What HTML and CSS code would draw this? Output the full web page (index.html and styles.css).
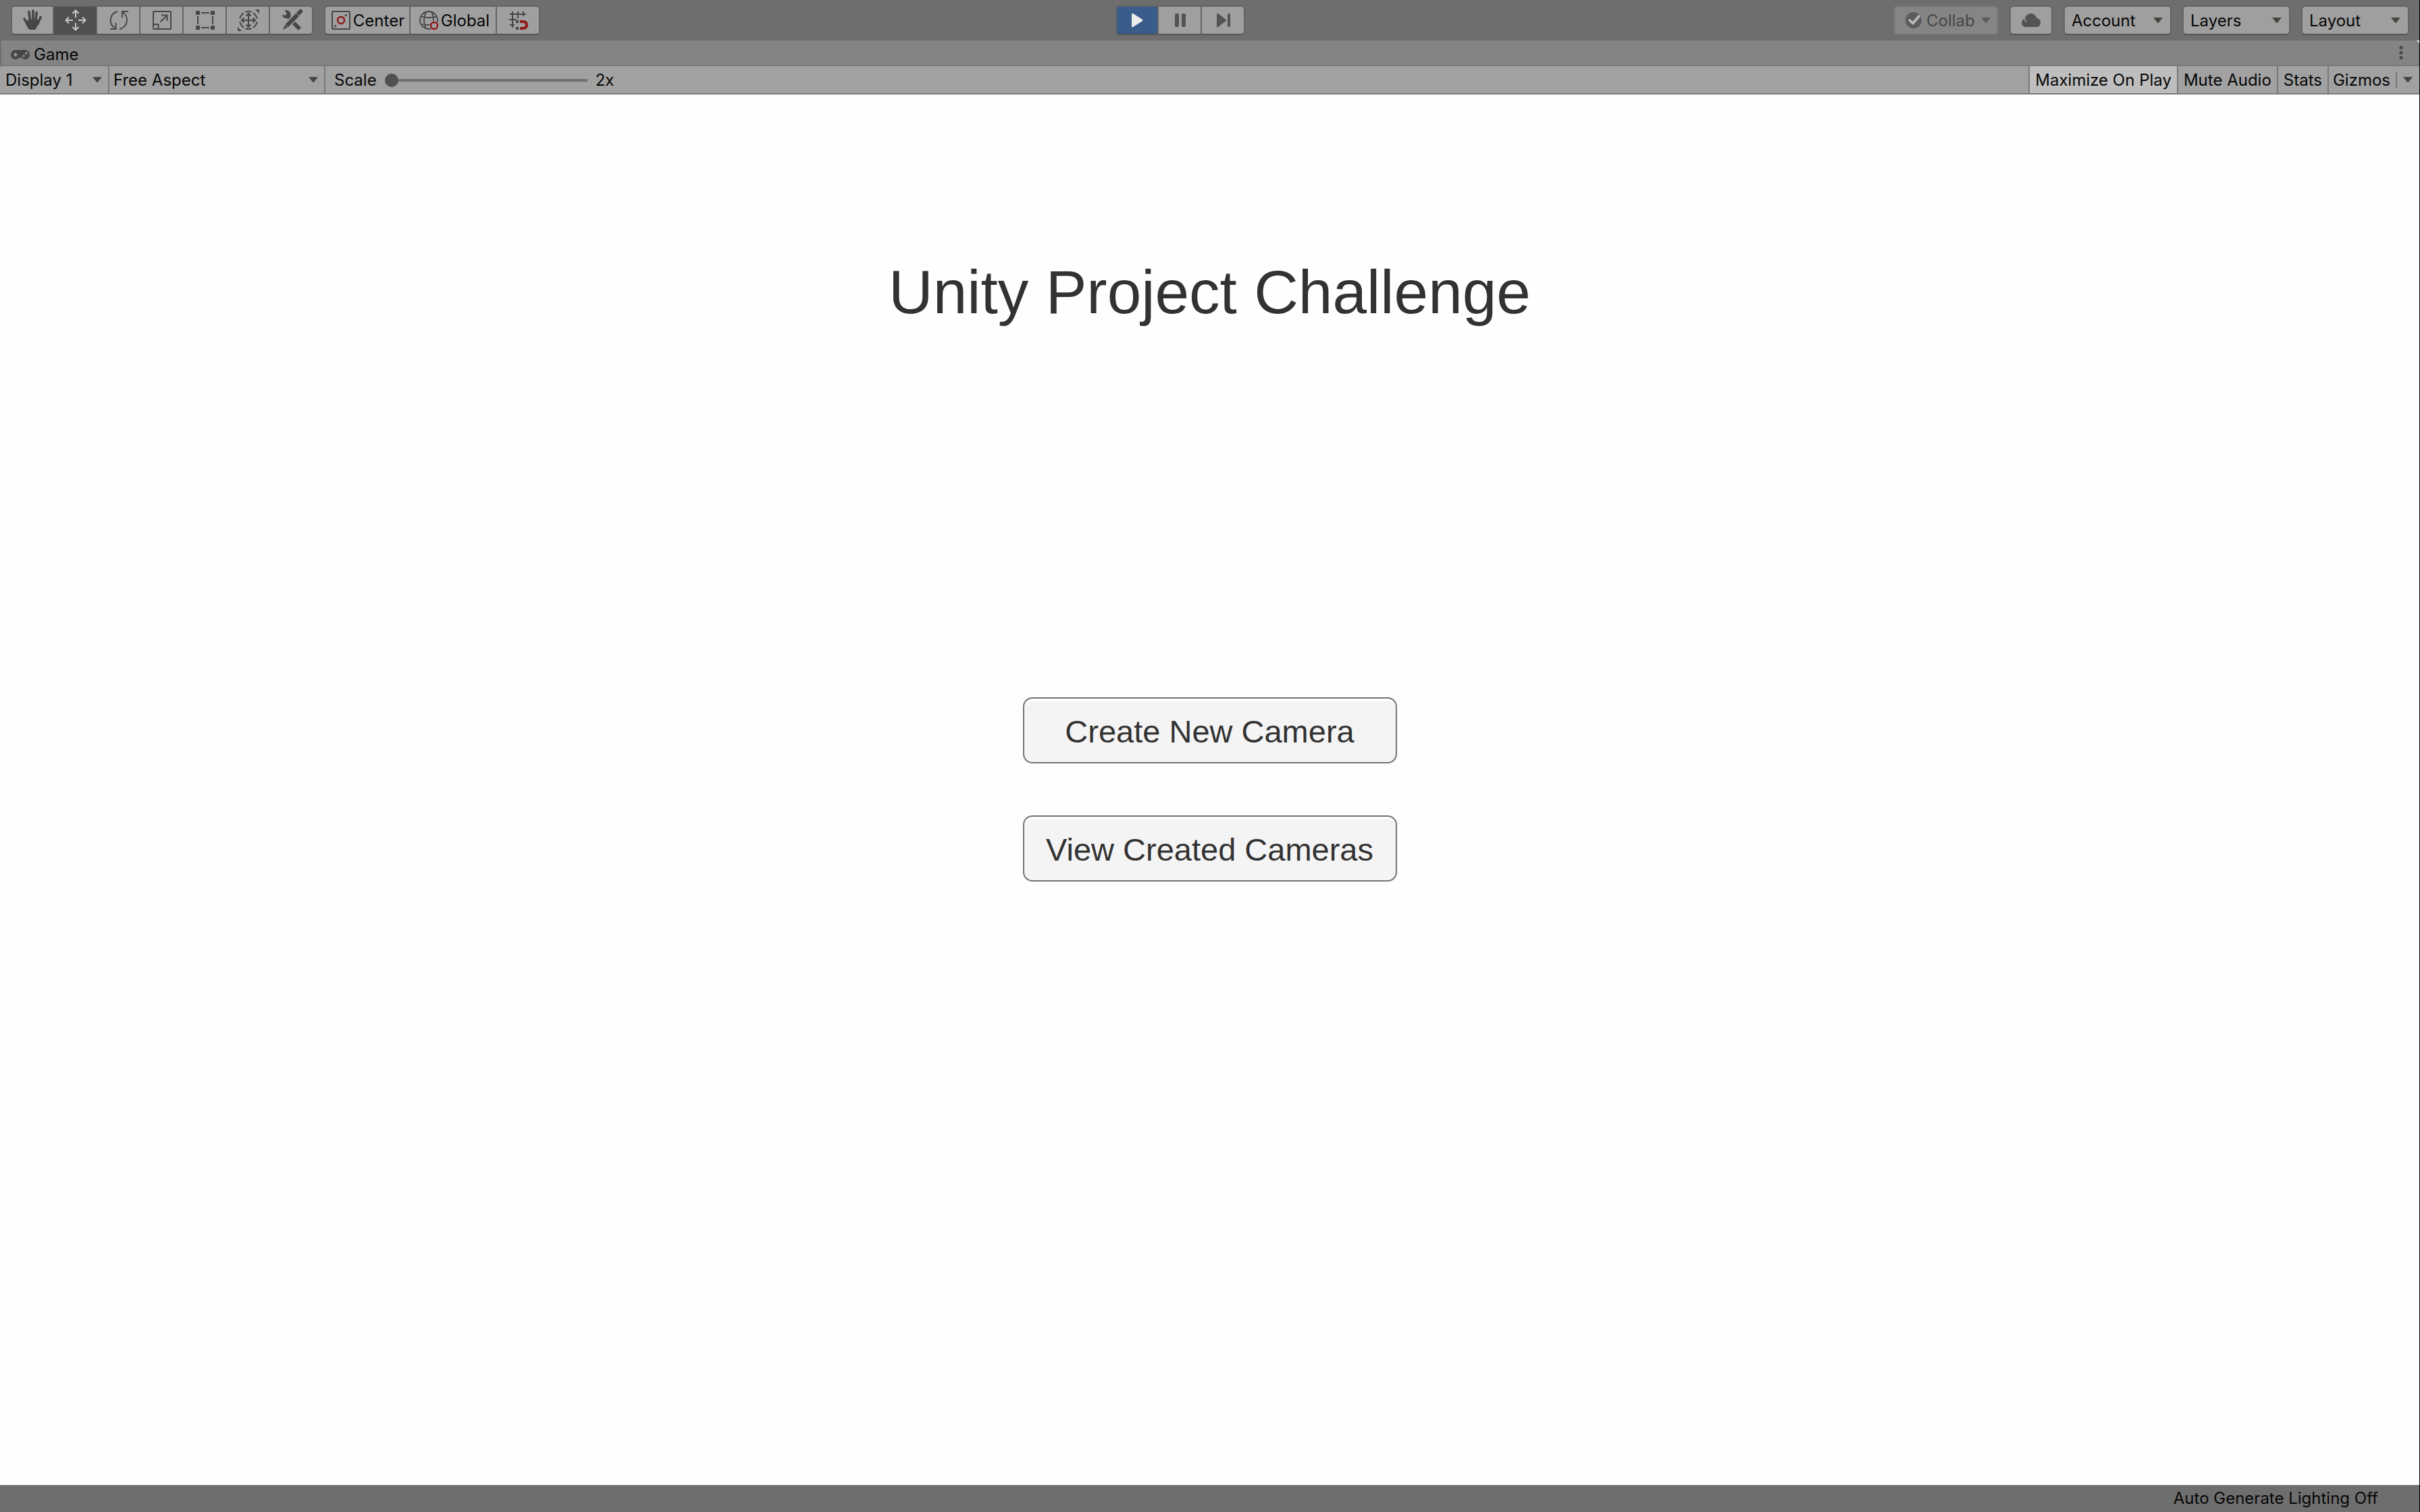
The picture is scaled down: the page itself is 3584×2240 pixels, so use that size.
FILE: index.html
```html
<!DOCTYPE html>
<html lang="en">
<head>
<meta charset="utf-8">
<title>Game</title>
<link rel="stylesheet" href="styles.css">
</head>
<body>
<svg class="defs" aria-hidden="true">
  <symbol id="caret" viewBox="0 0 14 8"><path d="M0 0h14L8 7.5q-1 1-2 0z" fill="currentColor"/></symbol>
</svg>
<div class="editor">
  <header class="toolbar">
    <div class="toolbar-left">
      <div class="group" role="group" aria-label="Transform tools">
        <button class="tool" aria-label="Hand">
          <svg class="icon" viewBox="0 0 32 32"><g fill="none" stroke="currentColor" stroke-linecap="round" stroke-width="3.6"><path d="M4 14l5 9M10.800 3.500l2 14M17 2v16M22.300 4.500l-1.800 14M28.200 11.500l-5 11"/></g><path d="M6 19l4-4h14l1.500 3-3 8q-1.500 4-3 4h-6q-3 0-5-4z" fill="currentColor"/></svg>
        </button>
        <button class="tool tool-active" aria-label="Move" aria-pressed="true">
          <svg class="icon" viewBox="0 0 32 32"><path d="M16 12V2M11.500 6L16 1.500 20.500 6M16 20v10M11.500 26l4.500 4.500 4.500-4.500M12 16H2M6 11.500L1.500 16 6 20.500M20 16h10M26 11.500l4.500 4.500-4.500 4.500" fill="none" stroke="currentColor" stroke-width="2"/></svg>
        </button>
        <button class="tool" aria-label="Rotate">
          <svg class="icon" viewBox="0 0 32 32"><path d="M14 3A13.500 13.500 0 0 0 10 27.500M3 29h8.500v-9M17 29A13.500 13.500 0 0 0 22 4.500M21 12V3h9" fill="none" stroke="currentColor" stroke-width="2"/></svg>
        </button>
        <button class="tool" aria-label="Scale">
          <svg class="icon" viewBox="0 0 32 32"><rect x="3" y="3" width="26" height="26" rx="1" fill="none" stroke="currentColor" stroke-width="2"/><path d="M3 22h7.500v7M13.500 18.500L23.500 8.500M15 8.500h8.500V17" fill="none" stroke="currentColor" stroke-width="2"/></svg>
        </button>
        <button class="tool" aria-label="Rect">
          <svg class="icon" viewBox="0 0 32 32"><g fill="currentColor"><rect x="2" y="2" width="6" height="6" rx="1"/><rect x="24" y="2" width="6" height="6" rx="1"/><rect x="2" y="24" width="6" height="6" rx="1"/><rect x="24" y="24" width="6" height="6" rx="1"/></g><path d="M10 5h12M10 27h12M5 10v12M27 10v12" stroke="currentColor" stroke-width="2"/></svg>
        </button>
        <button class="tool" aria-label="Transform">
          <svg class="icon" viewBox="0 0 32 32"><g fill="none" stroke="currentColor" stroke-width="2"><path d="M11.500 3.800Q16 2 20.500 3.800M11.500 28.200Q16 30 20.500 28.200M3.200 13.500Q4.800 8 9 5M3.200 18.500Q4.800 24 9 27M28.800 13.500Q27.200 8 23 5M28.800 18.500Q27.200 24 23 27"/><path d="M16 7v18M7 16h18M12.500 9.500L16 6l3.500 3.500M12.500 22.500L16 26l3.500-3.500M9.500 12.500L6 16l3.500 3.500M22.500 12.500L26 16l-3.500 3.500"/></g><path d="M26 0h6v6zM0 26v6h6z" fill="currentColor"/></svg>
        </button>
        <button class="tool" aria-label="Custom tools">
          <svg class="icon" viewBox="0 0 32 32"><path d="M19 20l9 9" stroke="currentColor" stroke-width="6"/><path d="M2 7.500l5 1.500 1.500-3.500-3-4Q11-.5 14 5q1 3 0 5l3.500 3.500-4 4L9 13q-6 .5-7-5.500z" fill="currentColor"/><path d="M24 8L8 24" stroke="#9f9f9f" stroke-width="9"/><path d="M25.500 6.500l4-4" stroke="currentColor" stroke-width="6" stroke-linecap="round"/><path d="M22.500 5.500l4.500 4.500L11 26l-8 4 3.500-8z" fill="currentColor"/><path d="M6 22l4.500 4.500M22.500 5l5 5" stroke="#9f9f9f" stroke-width="1"/></svg>
        </button>
      </div>
      <div class="group" role="group" aria-label="Handle options">
        <button class="handle">
          <svg class="icon" viewBox="0 0 32 32"><rect x="3" y="3" width="26" height="26" rx="1" fill="none" stroke="currentColor" stroke-width="2"/><path d="M6 26l4-4M22 10l4-4" stroke="currentColor" stroke-width="2" stroke-dasharray="4 2"/><circle cx="16" cy="16" r="5" fill="none" stroke="#8f1a18" stroke-width="2.400"/></svg><span>Center</span>
        </button>
        <button class="handle">
          <svg class="icon" viewBox="0 0 32 32"><g fill="none" stroke="currentColor" stroke-width="1.800"><circle cx="16" cy="16" r="13"/><path d="M12 3.500Q6 16 12 28.500M20 3.500Q24 11 22.500 19M4 10.500q12 3 24 0M4 21.500q7 2 14 1"/></g><circle cx="24" cy="24" r="7" fill="#9f9f9f"/><circle cx="24" cy="24" r="5" fill="none" stroke="#8f1a18" stroke-width="2.400"/></svg><span>Global</span>
        </button>
        <button class="tool" aria-label="Grid snapping">
          <svg class="icon" viewBox="0 0 32 32"><path d="M3 7h24M2 15h11M7 3v24M15 3v10M23 3v7" stroke="currentColor" stroke-width="2"/><path d="M3 23h7" stroke="currentColor" stroke-width="2"/><path d="M12 16h4v4h-4zM12 26h4v4h-4z" fill="currentColor"/><path d="M18 18h4.500q5.500 0 5.500 5t-5.500 5H18" fill="none" stroke="#8f1a18" stroke-width="4"/></svg>
        </button>
      </div>
    </div>
    <div class="group" role="group" aria-label="Playback">
      <button class="tool tool-playing" aria-label="Play" aria-pressed="true">
        <svg class="icon" viewBox="0 0 32 32"><path d="M8 7q0-2 2-1l13.500 8.500q1.500 1.500 0 3L10 26q-2 1-2-1z" fill="currentColor"/></svg>
      </button>
      <button class="tool" aria-label="Pause">
        <svg class="icon" viewBox="0 0 32 32"><g fill="#535353"><rect x="8" y="6" width="6" height="20" rx="2"/><rect x="18" y="6" width="6" height="20" rx="2"/></g></svg>
      </button>
      <button class="tool" aria-label="Step">
        <svg class="icon" viewBox="0 0 32 32"><g fill="#535353"><path d="M6 7q0-2 2-1l11 8.500q1.500 1.500 0 3L8 26q-2 1-2-1z"/><rect x="22" y="6" width="4" height="20" rx="2"/></g></svg>
      </button>
    </div>
    <div class="toolbar-right">
      <button class="collab" disabled>
        <svg class="collab-icon" viewBox="0 0 24 24"><circle cx="12" cy="12" r="12" fill="#5c5c5c"/><path d="M5 11l6 5.500L21 5" fill="none" stroke="#bdbdbd" stroke-width="3.500"/></svg><span>Collab</span>
        <svg class="caret"><use href="#caret"/></svg>
      </button>
      <button class="tool tool-single" aria-label="Services">
        <svg class="icon" viewBox="0 0 32 32"><path d="M8.500 26q-6.500-.5-6.500-6 0-4.500 4.500-6.500Q9 6 16 6q6 0 8 6.500 6 1.500 6 7 0 6-6 6.500z" fill="#535353"/><path d="M6.500 12.500q0 4 3 6" fill="none" stroke="#9f9f9f" stroke-width="1.500"/></svg>
      </button>
      <div class="select menu"><select aria-label="Account"><option>Account</option></select><svg class="caret"><use href="#caret"/></svg></div>
      <div class="select menu"><select aria-label="Layers"><option>Layers</option></select><svg class="caret"><use href="#caret"/></svg></div>
      <div class="select menu"><select aria-label="Layout"><option>Layout</option></select><svg class="caret"><use href="#caret"/></svg></div>
    </div>
  </header>

  <div class="tabs">
    <a class="tab" href="#game">
      <svg class="pad" viewBox="0 0 28 14"><path d="M7 0h14a7 7 0 0 1 0 14q-3 0-5-2.500h-4Q10 14 7 14A7 7 0 0 1 7 0z" fill="#464646"/><path d="M4 7h6M7 4v6" stroke="#9a9a9a" stroke-width="1.800"/><circle cx="19" cy="9" r="2" fill="#858585"/><circle cx="23" cy="5" r="2" fill="#858585"/></svg>Game
    </a>
    <button class="kebab" aria-label="Tab options">
      <svg viewBox="0 0 6 20"><circle cx="3" cy="2.500" r="2.500"/><circle cx="3" cy="10" r="2.500"/><circle cx="3" cy="17.500" r="2.500"/></svg>
    </button>
  </div>

  <div class="game-bar">
    <div class="select display"><select aria-label="Display"><option>Display 1</option></select><svg class="caret"><use href="#caret"/></svg></div>
    <div class="select aspect"><select aria-label="Aspect"><option>Free Aspect</option></select><svg class="caret"><use href="#caret"/></svg></div>
    <div class="scale">
      <label for="scale">Scale</label>
      <input id="scale" type="range" min="2" max="10" value="2">
      <output for="scale">2x</output>
    </div>
    <div class="toggles">
      <button class="toggle toggle-on" aria-pressed="true">Maximize On Play</button>
      <button class="toggle">Mute Audio</button>
      <button class="toggle">Stats</button>
      <button class="toggle gizmos">Gizmos</button>
      <button class="gizmos-menu" aria-label="Gizmos menu"><svg class="caret"><use href="#caret"/></svg></button>
    </div>
  </div>

  <main class="canvas" id="game">
    <h1 class="title">Unity Project Challenge</h1>
    <div class="actions">
      <button class="action">Create New Camera</button>
      <button class="action">View Created Cameras</button>
    </div>
  </main>

  <footer class="status">Auto Generate Lighting Off</footer>
</div>
</body>
</html>
```
FILE: styles.css
```css
* { box-sizing: border-box; }

body {
  margin: 0;
  font: 24px/32px Inter, sans-serif;
  color: #060606;
}

button, select, input {
  margin: 0;
  padding: 0;
  border: 0;
  border-radius: 0;
  background: none;
  font: inherit;
  color: inherit;
  white-space: nowrap;
}

svg { display: block; flex: none; }
.defs { display: none; }

.editor {
  display: flex;
  flex-direction: column;
  min-height: 100vh;
  border-right: 1px solid #000;
}

/* Main toolbar */
.toolbar {
  display: flex;
  height: 60px;
  padding: 8px 15px 8px 16px;
  background: #6e6e6e;
}

.toolbar-left {
  display: flex;
  gap: 16px;
  width: calc(50vw - 156px);
}

.toolbar-right {
  display: flex;
  gap: 16px;
  margin-left: auto;
}

.group { display: flex; }

.tool, .handle {
  display: flex;
  align-items: center;
  justify-content: center;
  width: 64px;
  height: 44px;
  padding-left: 2px;
  border: 2px solid #646464;
  border-left-width: 0;
  border-bottom-color: #555;
  background: #9f9f9f;
  color: #464646;
}

.group > :first-child {
  padding-left: 0;
  border-left-width: 2px;
  border-radius: 6px 0 0 6px;
}

.group > :last-child { border-radius: 0 6px 6px 0; }

.tool.tool-active { background: #505050; color: #c8c8c8; }
.tool.tool-playing { background: #3a5c8a; color: #ececec; }

.tool.tool-single {
  padding-left: 0;
  border-left-width: 2px;
  border-radius: 6px;
}

.handle {
  width: 128px;
  color: #060606;
}

.handle .icon { color: #464646; }
.handle span, .collab span { padding: 2px 0 0 2px; }

.icon { width: 32px; height: 32px; }
.caret { width: 14px; height: 8px; color: #464641; }

.collab {
  display: flex;
  align-items: center;
  width: 156px;
  height: 44px;
  padding-left: 16px;
  border: 2px solid #747474;
  border-radius: 6px;
  background: #858585;
  color: #464646;
  gap: 5px;
}

.collab .caret { margin-left: 4px; color: #5c5c5c; }
.collab-icon { width: 24px; height: 24px; }

.select { display: grid; align-items: center; }
.select > * { grid-area: 1 / 1; }

.select select {
  width: 100%;
  height: 100%;
  padding-top: 2px;
  appearance: none;
}

.select .caret {
  justify-self: end;
  margin-right: 9px;
  pointer-events: none;
}

.menu {
  width: 160px;
  height: 44px;
  border: 2px solid #646464;
  border-bottom-color: #555;
  border-radius: 6px;
  background: #9f9f9f;
}

.menu select { padding-left: 10px; }
.menu .caret { margin-right: 11px; }

/* Tab strip */
.tabs {
  display: flex;
  justify-content: space-between;
  height: 38px;
  border: 2px solid #6e6e6e;
  border-width: 0 1px 2px 2px;
  border-bottom-color: #797979;
  border-radius: 0 6px 0 0;
  background: #848484;
}

.tab {
  display: flex;
  align-items: center;
  gap: 6px;
  padding: 5px 14px 0;
  color: inherit;
  text-decoration: none;
}

.pad { width: 28px; height: 14px; }
.kebab { padding: 0 23px; }
.kebab svg { width: 6px; height: 20px; fill: #464641; }

/* Game view options */
.game-bar {
  display: flex;
  height: 42px;
  border-bottom: 2px solid #797979;
  background: #a1a1a1;
}

.display, .aspect { border-right: 2px solid #797979; }
.display { width: 162px; }
.aspect { width: 320px; }
.display select { padding-left: 8px; }
.aspect select { padding-left: 6px; }

.scale {
  display: flex;
  align-items: center;
  gap: 12px;
  padding: 2px 0 0 13px;
}

.scale input {
  width: 300px;
  height: 20px;
  appearance: none;
}

.scale input::-webkit-slider-runnable-track {
  height: 20px;
  background: linear-gradient(#707070, #707070) center / 100% 4px no-repeat;
}

.scale input::-webkit-slider-thumb {
  width: 20px;
  height: 20px;
  border-radius: 50%;
  background: #505050;
  appearance: none;
}

.toggles {
  display: flex;
  align-items: center;
  margin-left: auto;
}

.toggle {
  height: 40px;
  padding: 2px 8px 0;
  border-left: 2px solid #797979;
}

.toggle-on { background: #bebebe; }
.gizmos { padding: 2px 8px 0 6px; }

.gizmos-menu {
  height: 24px;
  padding: 0 10px 0 9px;
  border-left: 2px solid #797979;
}

/* Game canvas */
.canvas {
  display: flex;
  flex: 1;
  flex-direction: column;
  align-items: center;
  padding-top: 241px;
  background: #fefefe;
  font-family: "Liberation Sans", Arial, sans-serif;
  color: #323232;
}

.title {
  margin: 0;
  font-size: 91px;
  line-height: 104px;
  font-weight: 400;
}

.actions {
  display: grid;
  gap: 77px;
  margin-top: 548px;
}

.action {
  width: 554px;
  height: 98px;
  padding-top: 4px;
  border: 2px solid #747474;
  border-radius: 14px;
  background: #f4f4f4;
  box-shadow: inset 0 4px 1px #fff;
  font-size: 47px;
  line-height: 56px;
}

.status {
  height: 40px;
  padding: 4px 61px 4px 0;
  background: #6e6e6e;
  text-align: right;
}
```
